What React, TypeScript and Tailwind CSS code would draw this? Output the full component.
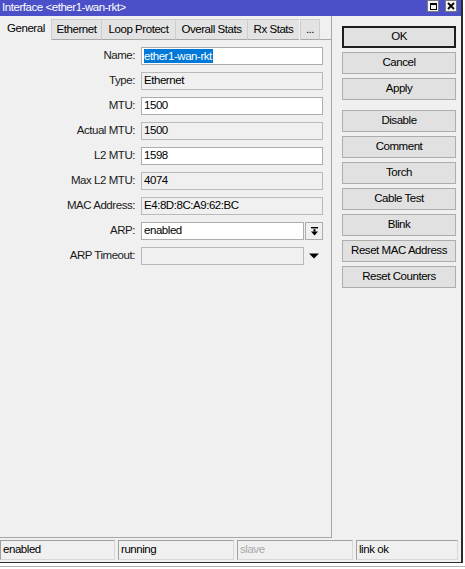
import React from "react";

type FieldKind = "edit" | "ro" | "selected" | "combo" | "empty";

interface Field {
  label: string;
  value: string;
  kind: FieldKind;
}

const fields: Field[] = [
  { label: "Name:", value: "ether1-wan-rkt", kind: "selected" },
  { label: "Type:", value: "Ethernet", kind: "ro" },
  { label: "MTU:", value: "1500", kind: "edit" },
  { label: "Actual MTU:", value: "1500", kind: "ro" },
  { label: "L2 MTU:", value: "1598", kind: "edit" },
  { label: "Max L2 MTU:", value: "4074", kind: "ro" },
  { label: "MAC Address:", value: "E4:8D:8C:A9:62:BC", kind: "ro" },
  { label: "ARP:", value: "enabled", kind: "combo" },
  { label: "ARP Timeout:", value: "", kind: "empty" },
];

const tabs = [
  { name: "Ethernet", w: "w-[50px]" },
  { name: "Loop Protect", w: "w-[74px]" },
  { name: "Overall Stats", w: "w-[72px]" },
  { name: "Rx Stats", w: "w-[52px]" },
];

const actions = ["Disable", "Comment", "Torch", "Cable Test", "Blink", "Reset MAC Address", "Reset Counters"];

function WinButton({ label, primary }: { label: string; primary?: boolean }) {
  return (
    <div
      className={
        "flex h-[22px] w-[114px] items-center justify-center bg-[#e1e1e1] text-black " +
        (primary ? "border-2 border-[#1e1e1e]" : "border border-[#adadad]")
      }
    >
      {label}
    </div>
  );
}

function ComboArrow() {
  return (
    <svg width="9" height="9" viewBox="0 0 9 9">
      <rect x="1" y="0" width="7" height="1.4" fill="#000" />
      <rect x="3.5" y="2.2" width="2" height="2.4" fill="#000" />
      <polygon points="1,4.4 8,4.4 4.5,8.4" fill="#000" />
    </svg>
  );
}

function FieldRow({ f }: { f: Field }) {
  return (
    <div className="flex h-[25px] items-start">
      <div className="flex h-[18px] w-[135px] items-center justify-end text-[#1a1a1a]">{f.label}</div>
      <div className="ml-[6px] flex">
        {f.kind === "selected" && (
          <div className="flex h-[18px] w-[182px] items-center border border-[#adadad] bg-white pl-[2px]">
            <span className="inline-block bg-[#0078d7] pr-px leading-[14px] text-white">{f.value}</span>
          </div>
        )}
        {f.kind === "edit" && (
          <div className="flex h-[18px] w-[182px] items-center border border-[#adadad] bg-white pl-[2px] text-black">
            {f.value}
          </div>
        )}
        {f.kind === "ro" && (
          <div className="flex h-[18px] w-[182px] items-center border border-[#b9b9b9] bg-[#f0f0f0] pl-[2px] text-black">
            {f.value}
          </div>
        )}
        {f.kind === "combo" && (
          <>
            <div className="flex h-[18px] w-[163px] items-center border border-[#adadad] bg-white pl-[2px] text-black">
              {f.value}
            </div>
            <div className="ml-px flex h-[18px] w-[18px] items-center justify-center border border-[#adadad] bg-[#f0f0f0]">
              <ComboArrow />
            </div>
          </>
        )}
        {f.kind === "empty" && (
          <>
            <div className="h-[18px] w-[163px] border border-[#b9b9b9] bg-[#f0f0f0]" />
            <div className="ml-px flex h-[18px] w-[18px] items-center justify-center">
              <svg width="10" height="6" viewBox="0 0 10 6">
                <polygon points="0,0.5 10,0.5 5,5.5" fill="#000" />
              </svg>
            </div>
          </>
        )}
      </div>
    </div>
  );
}

const statusCells = [
  { text: "enabled", w: "w-[115px]", dim: false },
  { text: "running", w: "w-[116px]", dim: false },
  { text: "slave", w: "w-[116px]", dim: true },
  { text: "link ok", w: "w-[102px]", dim: false },
];

export default function App() {
  return (
    <div className="h-[569px] w-[465px] overflow-hidden bg-white font-['Liberation_Sans',Arial,sans-serif] text-[11.5px] tracking-[-0.45px]">
      <div className="flex h-[563px] w-[463px] flex-col border-r-2 border-b border-[#2b2b2b] bg-[#f0f0f0]">
        {/* title bar */}
        <div className="flex h-[16px] shrink-0 bg-[#4b50c8]">
          <div className="flex flex-1 items-center pl-[2px] text-white">Interface &lt;ether1-wan-rkt&gt;</div>
          <div className="flex h-[12px] w-[12px] items-center justify-center border border-[#7a7a7a] bg-[#f4f4f4]">
            <div className="h-[7px] w-[7px] border border-t-2 border-black" />
          </div>
          <div className="ml-[6px] mr-[4px] flex h-[12px] w-[12px] items-center justify-center border border-[#7a7a7a] bg-[#f4f4f4]">
            <svg width="8" height="8" viewBox="0 0 8 8">
              <path d="M1 1L7 7M7 1L1 7" stroke="#000" strokeWidth="1.8" />
            </svg>
          </div>
        </div>

        <div className="flex flex-1 flex-col">
          <div className="flex">
            {/* tabs + panel */}
            <div className="flex w-[332px] flex-col">
              <div className="flex h-[24px] items-end">
                <div className="flex h-[24px] w-[51px] items-center pl-[7px] pt-[2px] text-black">General</div>
                {tabs.map((t) => (
                  <div
                    key={t.name}
                    className={
                      "flex h-[21px] items-center justify-center border-t border-l border-b border-t-[#cdcdcd] border-l-[#cdcdcd] border-b-[#a8a8a8] bg-[#e3e3e3] text-black " +
                      t.w
                    }
                  >
                    {t.name}
                  </div>
                ))}
                <div className="ml-px flex h-[21px] w-[20px] items-center justify-center border border-b-[#a8a8a8] border-[#cdcdcd] bg-[#e3e3e3] text-black">
                  ...
                </div>
                <div className="h-full flex-1 border-r border-b border-[#a8a8a8]" />
              </div>
              <div className="h-[498px] border-r border-b border-[#a8a8a8] pt-[7px]">
                {fields.map((f) => (
                  <FieldRow key={f.label} f={f} />
                ))}
              </div>
            </div>

            {/* buttons */}
            <div className="ml-[10px] mt-[10px] flex flex-col">
              <div className="flex flex-col gap-[4px]">
                <WinButton label="OK" primary />
                <WinButton label="Cancel" />
                <WinButton label="Apply" />
              </div>
              <div className="mt-[10px] flex flex-col gap-[4px]">
                {actions.map((a) => (
                  <WinButton key={a} label={a} />
                ))}
              </div>
            </div>
          </div>

          {/* status bar */}
          <div className="mt-[2px] flex gap-[3px]">
            {statusCells.map((c) => (
              <div
                key={c.text}
                className={
                  "flex h-[20px] items-center border border-t-[#a0a0a0] border-l-[#a0a0a0] border-r-[#d8d8d8] border-b-[#d8d8d8] pl-[2px] " +
                  c.w +
                  (c.dim ? " text-[#a8a8a8]" : " text-black")
                }
              >
                {c.text}
              </div>
            ))}
          </div>
        </div>
      </div>
      <div className="mt-[3px] h-px w-[465px] bg-[#b0b0b0]" />
    </div>
  );
}
